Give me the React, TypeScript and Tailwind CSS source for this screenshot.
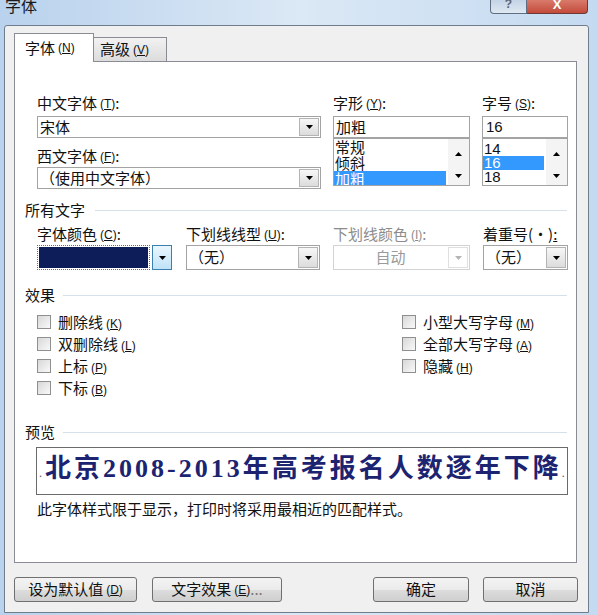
import React from 'react';

// hotkey marker like (T) with the letter underlined
function Hk({ k }: { k: string }) {
  return (
    <span className="ml-[3px] font-['Liberation_Sans',sans-serif] text-[12px]">
      (<span className="underline">{k}</span>)
    </span>
  );
}

function Arrow({ up = false, color = '#000' }: { up?: boolean; color?: string }) {
  return (
    <svg width="7" height="4" viewBox="0 0 7 4">
      <path d={up ? 'M0 4h7L3.5 0z' : 'M0 0h7L3.5 4z'} fill={color} />
    </svg>
  );
}

function Combo({ text, disabled = false, center = false }: { text: string; disabled?: boolean; center?: boolean }) {
  return (
    <div className={`flex h-full border bg-white ${disabled ? 'border-[#d3d3d3]' : 'border-[#a3a3a3]'}`}>
      <div
        className={`flex-1 flex items-center px-[2px] ${center ? 'justify-center' : ''} ${
          disabled ? 'text-[#9a9a9a]' : 'text-[#111]'
        }`}
      >
        {text}
      </div>
      <div
        className={`w-[20px] m-[1px] border flex items-center justify-center ${
          disabled
            ? 'border-[#e0e0e0] bg-white'
            : 'border-[#b4b4b4] bg-gradient-to-b from-[#f7f7f7] to-[#dcdcdc]'
        }`}
      >
        <Arrow color={disabled ? '#b5b5b5' : '#000'} />
      </div>
    </div>
  );
}

function ListBox({ items, selected, wide }: { items: string[]; selected: number; wide?: boolean }) {
  return (
    <div className="flex h-[48px] border border-[#a3a3a3] bg-white overflow-hidden">
      <div className={`flex-1 flex flex-col ${wide ? 'pt-0' : 'pt-[3px]'}`}>
        {items.map((it, i) => (
          <div
            key={it}
            className={`shrink-0 overflow-hidden px-[1px] ${wide ? 'h-[16px] leading-[16px]' : 'h-[14px] leading-[14px]'} ${
              i === selected ? 'bg-[#3399ff] text-white' : 'text-[#111]'
            }`}
          >
            {it}
          </div>
        ))}
      </div>
      <div className="w-[21px] ml-[2px] bg-[#f4f4f4] flex flex-col items-center justify-between pt-[13px] pb-[7px]">
        <Arrow up />
        <Arrow />
      </div>
    </div>
  );
}

function Section({ title, gap }: { title: string; gap: string }) {
  return (
    <div className={`flex items-center h-[20px] pl-[10px] pr-[9px] ${gap}`}>
      <span className="text-[#111]">{title}</span>
      <div className="flex-1 h-px bg-[#d6e0ea]" />
    </div>
  );
}

function Check({ label, k }: { label: string; k: string }) {
  return (
    <div className="flex items-center h-[22px] gap-[7px]">
      <div className="w-[14px] h-[14px] border border-[#8f8f8f] bg-gradient-to-br from-[#d8d8d8] to-[#f9f9f9]" />
      <span className="text-[#111]">
        {label}
        <Hk k={k} />
      </span>
    </div>
  );
}

function Btn({ children, w }: { children: React.ReactNode; w: string }) {
  return (
    <div
      className={`${w} h-[25px] border border-[#707070] rounded-[3px] flex items-center justify-center text-[#111] bg-[linear-gradient(to_bottom,#f3f3f3_0%,#ebebeb_50%,#dddddd_51%,#cfcfcf_100%)]`}
    >
      {children}
    </div>
  );
}

export default function App() {
  return (
    <div className="w-[598px] h-[615px] overflow-hidden bg-gradient-to-r from-[#b9d2ed] via-[#dbe8f5] to-[#c4daf0] font-['Noto_Sans_CJK_SC',sans-serif] text-[15px]">
      {/* title bar */}
      <div className="flex items-start h-[25px]">
        <span className="ml-[5px] -mt-[3px] text-[16px] leading-[16px] text-[#1a1a1a]">字体</span>
        <div className="ml-auto mr-[10px] flex">
          <div className="w-[37px] h-[14px] border border-t-0 border-[#5f6e82] rounded-bl-[4px] bg-gradient-to-b from-[#c3d3e6] to-[#dfe8f2] flex justify-center overflow-hidden">
            <span className="-mt-[5px] text-[12px] font-bold text-[#5a6473] font-['Liberation_Sans',sans-serif]">?</span>
          </div>
          <div className="w-[61px] h-[14px] border border-t-0 border-l-0 border-[#6b3a36] rounded-br-[4px] bg-gradient-to-b from-[#d97a6c] to-[#c24a3a] flex justify-center overflow-hidden">
            <span className="-mt-[5px] text-[13px] font-bold text-white font-['Liberation_Sans',sans-serif]">X</span>
          </div>
        </div>
      </div>

      {/* dialog body */}
      <div className="ml-[4px] w-[585px] h-[588px] border border-[#6e7c8c] rounded-t-[3px] bg-[#f0f0f0] flex flex-col">
        {/* tabs */}
        <div className="flex items-end pl-[9px] pt-[7px]">
          <div className="relative z-10 -mb-[1px] w-[80px] h-[29px] border border-b-0 border-[#898c95] bg-white flex items-center pl-[10px] text-[#111]">
            字体<Hk k="N" />
          </div>
          <div className="w-[73px] h-[24px] border border-l-0 border-b-0 border-[#898c95] bg-gradient-to-b from-[#f2f2f2] to-[#dcdcdc] flex items-center pl-[6px] text-[#111]">
            高级<Hk k="V" />
          </div>
        </div>

        {/* tab panel */}
        <div className="ml-[9px] w-[563px] h-[502px] border border-[#898c95] bg-white flex flex-col">
          {/* font pickers */}
          <div className="mt-[32px] pl-[22px] flex gap-[12px]">
            <div className="w-[284px] flex flex-col">
              <div className="h-[22px] flex items-center pb-[3px] text-[#111]">
                中文字体<Hk k="T" />:
              </div>
              <div className="h-[22px]">
                <Combo text="宋体" />
              </div>
              <div className="mt-[8px] h-[21px] flex items-center text-[#111]">
                西文字体<Hk k="F" />:
              </div>
              <div className="h-[22px]">
                <Combo text="（使用中文字体）" />
              </div>
            </div>
            <div className="w-[137px] flex flex-col">
              <div className="h-[22px] flex items-center pb-[3px] text-[#111]">
                字形<Hk k="Y" />:
              </div>
              <div className="h-[22px] border border-[#a3a3a3] flex items-center px-[2px] text-[#111]">加粗</div>
              <ListBox items={['常规', '倾斜', '加粗']} selected={2} wide />
            </div>
            <div className="w-[86px] flex flex-col">
              <div className="h-[22px] flex items-center pb-[3px] text-[#111]">
                字号<Hk k="S" />:
              </div>
              <div className="h-[22px] border border-[#a3a3a3] flex items-center px-[3px] text-[#111] font-['Liberation_Sans',sans-serif]">
                16
              </div>
              <div className="font-['Liberation_Sans',sans-serif]">
                <ListBox items={['14', '16', '18']} selected={1} />
              </div>
            </div>
          </div>

          {/* all text */}
          <div className="mt-[11px]">
            <Section title="所有文字" gap="gap-[10px]" />
          </div>
          <div className="mt-[4px] pl-[22px] flex">
            <div className="w-[135px] flex flex-col">
              <div className="h-[21px] flex items-center text-[#111]">
                字体颜色<Hk k="C" />:
              </div>
              <div className="h-[25px] flex">
                <div className="w-[113px] border border-dotted border-[#6a6a6a] p-[1px] bg-white">
                  <div className="w-full h-full bg-[#0d1d5a]" />
                </div>
                <div className="ml-[2px] w-[20px] border border-[#3c7fb1] bg-gradient-to-b from-[#eaf6fd] to-[#bfe3f8] flex items-center justify-center">
                  <Arrow />
                </div>
              </div>
            </div>
            <div className="ml-[14px] w-[134px] flex flex-col">
              <div className="h-[21px] flex items-center text-[#111]">
                下划线线型<Hk k="U" />:
              </div>
              <div className="h-[25px]">
                <Combo text="（无）" />
              </div>
            </div>
            <div className="ml-[13px] w-[137px] flex flex-col">
              <div className="h-[21px] flex items-center text-[#8c8c8c]">
                下划线颜色<Hk k="I" />:
              </div>
              <div className="h-[25px]">
                <Combo text="自动" disabled center />
              </div>
            </div>
            <div className="ml-[13px] w-[85px] flex flex-col">
              <div className="h-[21px] flex items-center text-[#111] whitespace-nowrap">
                着重号(·)<span className="underline">:</span>
              </div>
              <div className="h-[25px]">
                <Combo text="（无）" />
              </div>
            </div>
          </div>

          {/* effects */}
          <div className="mt-[15px]">
            <Section title="效果" gap="gap-[8px]" />
          </div>
          <div className="mt-[6px] pl-[22px] flex">
            <div className="w-[365px] flex flex-col">
              <Check label="删除线" k="K" />
              <Check label="双删除线" k="L" />
              <Check label="上标" k="P" />
              <Check label="下标" k="B" />
            </div>
            <div className="flex flex-col">
              <Check label="小型大写字母" k="M" />
              <Check label="全部大写字母" k="A" />
              <Check label="隐藏" k="H" />
            </div>
          </div>

          {/* preview */}
          <div className="mt-[23px]">
            <Section title="预览" gap="gap-[8px]" />
          </div>
          <div className="mt-[5px] ml-[21px] w-[532px] h-[48px] border border-[#6a6a6a] flex items-center pl-[2px] overflow-hidden">
            <span className="whitespace-nowrap text-[26px] leading-[30px] text-[#1c2370] font-['Liberation_Serif','Noto_Sans_CJK_SC',serif]">
              <span className="text-[12px] text-[#555]">.</span>
              <span className="ml-[3px] font-bold tracking-[3px]">北京2008-2013年高考报名人数逐年下降</span>
              <span className="text-[12px] text-[#555]">.</span>
            </span>
          </div>
          <div className="mt-[4px] ml-[22px] h-[20px] flex items-center text-[#111]">
            此字体样式限于显示，打印时将采用最相近的匹配样式。
          </div>
        </div>

        {/* buttons */}
        <div className="mt-[14px] pl-[9px] pr-[10px] flex">
          <Btn w="w-[123px]">
            设为默认值<Hk k="D" />
          </Btn>
          <div className="ml-[15px]">
            <Btn w="w-[130px]">
              文字效果<Hk k="E" />
              <span className="text-[#777]">...</span>
            </Btn>
          </div>
          <div className="ml-auto flex gap-[14px]">
            <Btn w="w-[96px]">确定</Btn>
            <Btn w="w-[95px]">取消</Btn>
          </div>
        </div>
      </div>
    </div>
  );
}
